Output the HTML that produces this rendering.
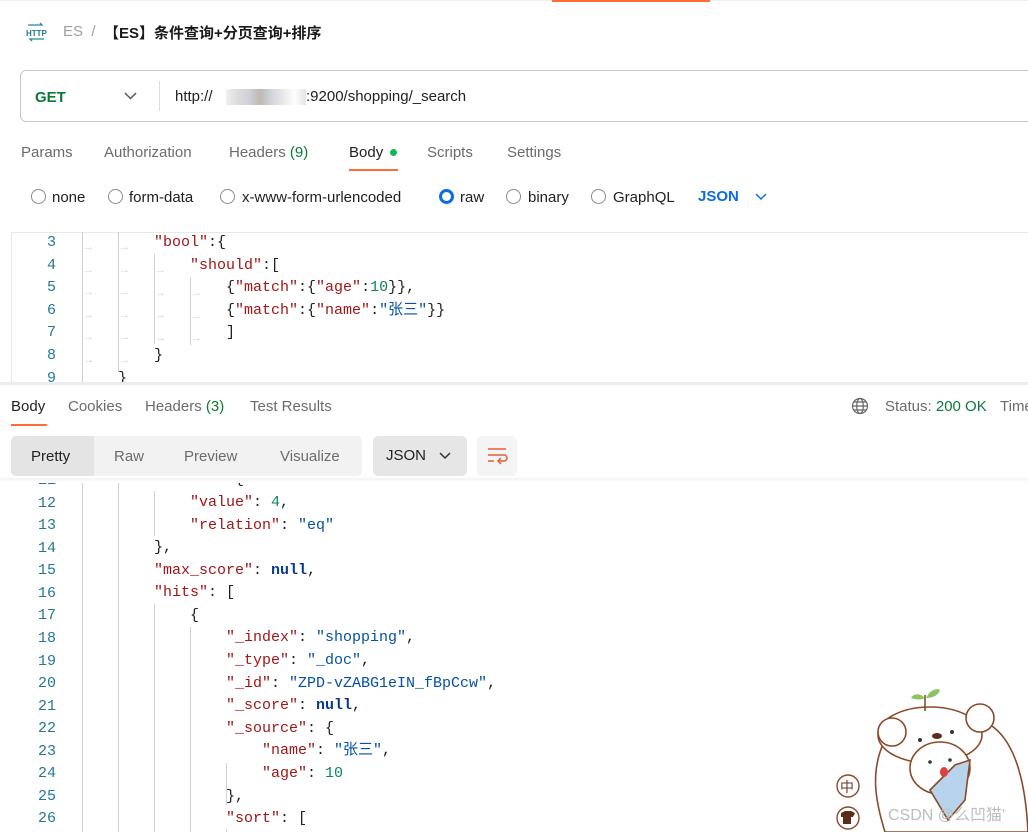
<!DOCTYPE html>
<html><head><meta charset="utf-8">
<style>
*{margin:0;padding:0;box-sizing:border-box}
body{width:1028px;height:832px;overflow:hidden;background:#fff;position:relative;font-family:"Liberation Sans","Noto Sans CJK SC",sans-serif;color:#212121}
.a{position:absolute;white-space:nowrap}
.t{font-size:15px;color:#6b6b6b}
.rad{position:absolute;width:15px;height:15px;border:1.3px solid #8a8a8a;border-radius:50%}
.code{font-family:"Liberation Mono","Noto Sans CJK SC",monospace;font-size:15px;line-height:22.6px}
.ln{position:absolute;width:56px;text-align:right;color:#237893;font-family:"Liberation Mono",monospace;font-size:15px}
.k{color:#a31515}.s{color:#0451a5}.n{color:#098658}.nl{color:#0b3a8c;font-weight:bold}
.g{position:absolute;width:1px;background:#d0d0d0}
.arr{position:absolute;color:#d0d0d0;font-size:11px}
</style></head><body>
<div class="a" style="left:0;top:0;width:1028px;height:1px;background:#eee"></div>
<div class="a" style="left:552px;top:0;width:158px;height:2px;background:#ff6c37"></div>
<!-- breadcrumb -->
<svg class="a" style="left:25px;top:22px" width="22" height="20" viewBox="0 0 22 20"><path d="M3 3h14l-2-2M19 17H5l2 2" stroke="#1f8a9c" stroke-width="1.3" fill="none"/><text x="1" y="14" font-size="8" font-family="Liberation Sans" fill="#1f7a8c" font-weight="bold">HTTP</text></svg>
<div class="a" style="left:63px;top:23px;font-size:15px;color:#a0a0a0">ES&nbsp; /</div>
<div class="a" style="left:104px;top:22px;font-size:15px;font-weight:bold;color:#1a1a1a">【ES】条件查询+分页查询+排序</div>
<!-- url -->
<div class="a" style="left:20px;top:70px;width:1020px;height:52px;border:1px solid #c8c8c8;border-radius:6px"></div>
<div class="a" style="left:35px;top:89px;font-size:15px;font-weight:bold;color:#0b7a3b">GET</div>
<svg class="a" style="left:124px;top:92px" width="13" height="9"><path d="M1 1l5.5 5.5L12 1" stroke="#555" stroke-width="1.5" fill="none"/></svg>
<div class="a" style="left:159px;top:81px;width:1px;height:30px;background:#ddd"></div>
<div class="a" style="left:175px;top:88px;font-size:15px;color:#222">http://</div>
<div class="a" style="left:226px;top:89px;width:80px;height:16px;background:linear-gradient(90deg,#eee,#d8d8d8,#c8ccd4,#b8b0a8,#ccd0d8,#e6e6e6,#fff,#e0e0e0);opacity:.9"></div>
<div class="a" style="left:306px;top:88px;font-size:15px;color:#222">:9200/shopping/_search</div>
<!-- tabs -->
<div class="a t" style="left:21px;top:144px">Params</div>
<div class="a t" style="left:104px;top:144px">Authorization</div>
<div class="a t" style="left:229px;top:144px">Headers <span style="color:#0b7a3b">(9)</span></div>
<div class="a" style="left:349px;top:144px;font-size:15px;color:#222">Body</div>
<div class="a" style="left:390px;top:149px;width:7px;height:7px;border-radius:50%;background:#0cbb52"></div>
<div class="a" style="left:349px;top:169px;width:49px;height:2px;background:#ff6c37"></div>
<div class="a t" style="left:427px;top:144px">Scripts</div>
<div class="a t" style="left:507px;top:144px">Settings</div>
<!-- radios -->
<div class="rad" style="left:31px;top:189px"></div><div class="a" style="left:52px;top:189px;font-size:15px">none</div>
<div class="rad" style="left:108px;top:189px"></div><div class="a" style="left:129px;top:189px;font-size:15px">form-data</div>
<div class="rad" style="left:220px;top:189px"></div><div class="a" style="left:242px;top:189px;font-size:15px">x-www-form-urlencoded</div>
<div class="rad" style="left:439px;top:189px;border:3.5px solid #0b6ee0"></div><div class="a" style="left:460px;top:189px;font-size:15px">raw</div>
<div class="rad" style="left:506px;top:189px"></div><div class="a" style="left:528px;top:189px;font-size:15px">binary</div>
<div class="rad" style="left:591px;top:189px"></div><div class="a" style="left:613px;top:189px;font-size:15px">GraphQL</div>
<div class="a" style="left:698px;top:188px;font-size:15px;font-weight:bold;color:#0b6ee0">JSON</div>
<svg class="a" style="left:755px;top:193px" width="12" height="8"><path d="M1 1l5 5 5-5" stroke="#0b6ee0" stroke-width="1.5" fill="none"/></svg>
<!-- request editor -->
<div class="a" style="left:11px;top:232px;width:1020px;height:1px;background:#e8e8e8"></div>
<div class="a" style="left:11px;top:232px;width:1px;height:150px;background:#e8e8e8"></div>
<div class="a" style="left:0;top:232px;width:1028px;height:150px;overflow:hidden">
<div class="ln" style="top:0;line-height:22.6px">3<br>4<br>5<br>6<br>7<br>8<br>9</div>
<div class="g" style="left:82px;top:0;height:150px"></div>
<div class="g" style="left:118px;top:0;height:140px"></div>
<div class="g" style="left:154px;top:22px;height:90px"></div>
<div class="g" style="left:190px;top:45px;height:68px"></div>
<div class="arr" style="left:83px;top:4px;line-height:22.6px">→<br>→<br>→<br>→<br>→<br>→</div>
<div class="arr" style="left:119px;top:4px;line-height:22.6px">→<br>→<br>→<br>→<br>→<br>→</div>
<div class="arr" style="left:155px;top:27px;line-height:22.6px">→<br>→<br>→<br>→</div>
<div class="arr" style="left:191px;top:50px;line-height:22.6px">→<br>→<br>→</div>
<div class="a code" style="left:154px;top:0px"><span class="k">"bool"</span>:{</div>
<div class="a code" style="left:190px;top:22.6px"><span class="k">"should"</span>:[</div>
<div class="a code" style="left:226px;top:45.2px">{<span class="k">"match"</span>:{<span class="k">"age"</span>:<span class="n">10</span>}},</div>
<div class="a code" style="left:226px;top:67.8px">{<span class="k">"match"</span>:{<span class="k">"name"</span>:<span class="s">"张三"</span>}}</div>
<div class="a code" style="left:226px;top:90.4px">]</div>
<div class="a code" style="left:154px;top:113px">}</div>
<div class="a code" style="left:118px;top:135.6px">}</div>
</div>
<div class="a" style="left:0;top:382px;width:1028px;height:3px;background:#ececec"></div>
<!-- response tabs -->
<div class="a" style="left:11px;top:398px;font-size:15px;color:#222">Body</div>
<div class="a" style="left:11px;top:424px;width:36px;height:2px;background:#ff6c37"></div>
<div class="a t" style="left:68px;top:398px">Cookies</div>
<div class="a t" style="left:145px;top:398px">Headers <span style="color:#0b7a3b">(3)</span></div>
<div class="a t" style="left:250px;top:398px">Test Results</div>
<svg class="a" style="left:851px;top:397px" width="18" height="18" viewBox="0 0 18 18"><g stroke="#666" stroke-width="1.2" fill="none"><circle cx="9" cy="9" r="7.5"/><ellipse cx="9" cy="9" rx="3.3" ry="7.5"/><path d="M1.5 9h15M3 5h12M3 13h12"/></g></svg>
<div class="a t" style="left:885px;top:398px">Status: <span style="color:#0b7a3b">200 OK</span></div>
<div class="a t" style="left:1000px;top:398px">Time</div>
<!-- view buttons -->
<div class="a" style="left:11px;top:436px;width:351px;height:40px;background:#f2f2f2;border-radius:5px"></div>
<div class="a" style="left:11px;top:436px;width:83px;height:40px;background:#e4e4e4;border-radius:5px 0 0 5px"></div>
<div class="a" style="left:31px;top:448px;font-size:15px;color:#222">Pretty</div>
<div class="a t" style="left:114px;top:448px">Raw</div>
<div class="a t" style="left:184px;top:448px">Preview</div>
<div class="a t" style="left:280px;top:448px">Visualize</div>
<div class="a" style="left:373px;top:436px;width:94px;height:40px;background:#e6e6e6;border-radius:5px"></div>
<div class="a" style="left:386px;top:447px;font-size:15px;color:#222">JSON</div>
<svg class="a" style="left:439px;top:452px" width="12" height="8"><path d="M1 1l5 5 5-5" stroke="#333" stroke-width="1.5" fill="none"/></svg>
<div class="a" style="left:477px;top:436px;width:40px;height:40px;background:#f4f4f4;border-radius:5px"></div>
<svg class="a" style="left:487px;top:447px" width="21" height="18" viewBox="0 0 21 18"><g stroke="#e0603a" stroke-width="1.5" fill="none"><path d="M1 2h18M1 8h16a3 3 0 010 6h-5M14 11l-3 3 3 3M1 14h6"/></g></svg>
<div class="a" style="left:0;top:478px;width:1028px;height:5px;background:linear-gradient(#f3f3f3,#fff)"></div>
<!-- response code -->
<div class="a" style="left:0;top:483px;width:1028px;height:349px;overflow:hidden">
<div class="ln" style="top:-13px;line-height:22.57px;font-size:15px">11<br>12<br>13<br>14<br>15<br>16<br>17<br>18<br>19<br>20<br>21<br>22<br>23<br>24<br>25<br>26</div>
<div class="g" style="left:82px;top:0;height:349px"></div>
<div class="g" style="left:118px;top:0;height:349px"></div>
<div class="g" style="left:154px;top:8px;height:45px"></div>
<div class="g" style="left:154px;top:121px;height:228px"></div>
<div class="g" style="left:190px;top:144px;height:205px"></div>
<div class="g" style="left:226px;top:280px;height:42px"></div>
<div class="g" style="left:226px;top:346px;height:5px"></div>
<div class="a code" style="left:154px;top:-14px"><span class="k">"total"</span>: {</div>
<div class="a code" style="left:190px;top:9px"><span class="k">"value"</span>: <span class="n">4</span>,</div>
<div class="a code" style="left:190px;top:31.5px"><span class="k">"relation"</span>: <span class="s">"eq"</span></div>
<div class="a code" style="left:154px;top:54px">},</div>
<div class="a code" style="left:154px;top:76.6px"><span class="k">"max_score"</span>: <span class="nl">null</span>,</div>
<div class="a code" style="left:154px;top:99.2px"><span class="k">"hits"</span>: [</div>
<div class="a code" style="left:190px;top:121.8px">{</div>
<div class="a code" style="left:226px;top:144.4px"><span class="k">"_index"</span>: <span class="s">"shopping"</span>,</div>
<div class="a code" style="left:226px;top:167px"><span class="k">"_type"</span>: <span class="s">"_doc"</span>,</div>
<div class="a code" style="left:226px;top:189.6px"><span class="k">"_id"</span>: <span class="s">"ZPD-vZABG1eIN_fBpCcw"</span>,</div>
<div class="a code" style="left:226px;top:212.2px"><span class="k">"_score"</span>: <span class="nl">null</span>,</div>
<div class="a code" style="left:226px;top:234.8px"><span class="k">"_source"</span>: {</div>
<div class="a code" style="left:262px;top:257.4px"><span class="k">"name"</span>: <span class="s">"张三"</span>,</div>
<div class="a code" style="left:262px;top:280px"><span class="k">"age"</span>: <span class="n">10</span></div>
<div class="a code" style="left:226px;top:302.6px">},</div>
<div class="a code" style="left:226px;top:325.2px"><span class="k">"sort"</span>: [</div>
</div>
<!-- bear sticker -->
<svg class="a" style="left:830px;top:680px" width="198" height="152" viewBox="0 0 198 152">
<g stroke="#8a4a2a" stroke-width="1.6" fill="#fff">
<path d="M55 152 C45 120 40 90 55 60 C65 35 110 30 150 40 C180 50 195 90 198 152Z"/>
<ellipse cx="100" cy="55" rx="52" ry="28"/>
<circle cx="62" cy="52" r="14"/><circle cx="150" cy="38" r="14"/>
<ellipse cx="110" cy="88" rx="30" ry="26"/>
<path d="M100 110 L125 85 L140 80 L135 120 L118 140 Z" fill="#b8d4ec"/>
<path d="M95 15c0 8 0 12 0 16" fill="none"/>
</g>
<path d="M95 18c-6-6-12-4-14 0c6 2 10 2 14 0zM96 18c4-8 10-10 14-8c-2 6-8 8-14 8z" fill="#8cc464"/>
<ellipse cx="107" cy="56" rx="5" ry="3" fill="#5a2f1a"/>
<circle cx="90" cy="60" r="2" fill="#333"/><circle cx="122" cy="52" r="2" fill="#333"/>
<circle cx="100" cy="82" r="1.8" fill="#333"/><circle cx="120" cy="80" r="1.8" fill="#333"/>
<ellipse cx="114" cy="92" rx="4" ry="5" fill="#e0403a"/>
<circle cx="18" cy="106" r="11" fill="#fff" stroke="#8a4a2a" stroke-width="1.4"/>
<text x="10" y="112" font-size="14" fill="#6a3a20" font-family="Noto Sans CJK SC">中</text>
<circle cx="18" cy="138" r="11" fill="#fff" stroke="#8a4a2a" stroke-width="1.4"/>
<path d="M11 133l4-2h6l4 2-2 4h-2v7h-8v-7h-2z" fill="#5a2f1a"/>
<text x="58" y="140" font-size="16" fill="#bdbdbd" font-family="Liberation Sans,Noto Sans CJK SC,sans-serif">CSDN @么凹猫'</text>
</svg>
</body></html>
